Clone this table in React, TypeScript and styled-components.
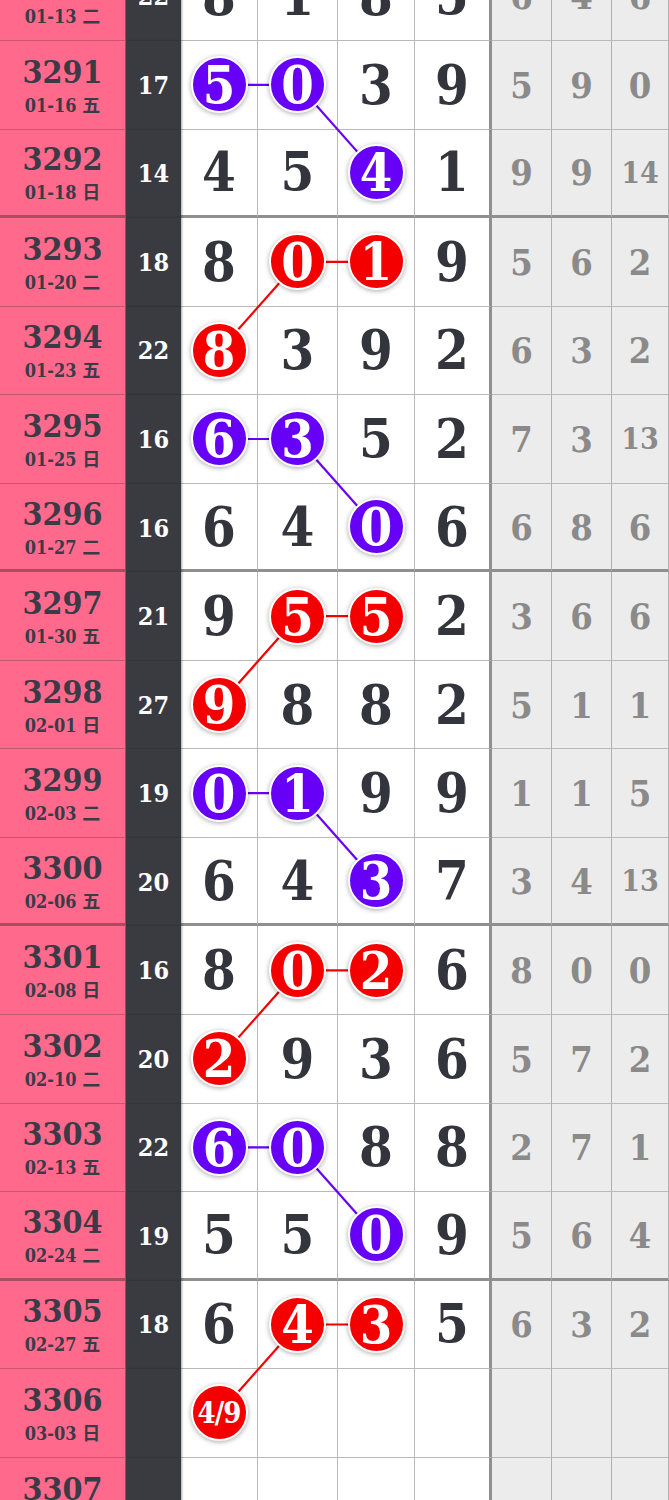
import React from "react";
import styled, { createGlobalStyle, css } from "styled-components";

const GlobalStyle = createGlobalStyle`
  html, body { margin: 0; padding: 0; background: #ffffff; overflow: hidden; }
  * { box-sizing: border-box; }
`;

const ROW_H = 88.55;
const COLS = [126, 55, 77, 80, 77, 77, 60, 60, 57];
const DIGIT_X = [219.5, 298, 376.5, 453.5];
const PURPLE = "#6700f6";
const RED = "#f40000";
const SERIF = `"DejaVu Serif", "Liberation Serif", "Noto Sans CJK SC", serif`;

type Kind = "p" | "r";
type RowData = {
  issue: string;
  date: string;
  sum: string;
  d: string[];
  g: string[];
  m?: Record<number, Kind>;
};

const rows: RowData[] = [
  { issue: "3290", date: "01-13 二", sum: "22", d: ["8", "1", "8", "5"], g: ["6", "4", "6"] },
  { issue: "3291", date: "01-16 五", sum: "17", d: ["5", "0", "3", "9"], g: ["5", "9", "0"], m: { 0: "p", 1: "p" } },
  { issue: "3292", date: "01-18 日", sum: "14", d: ["4", "5", "4", "1"], g: ["9", "9", "14"], m: { 2: "p" } },
  { issue: "3293", date: "01-20 二", sum: "18", d: ["8", "0", "1", "9"], g: ["5", "6", "2"], m: { 1: "r", 2: "r" } },
  { issue: "3294", date: "01-23 五", sum: "22", d: ["8", "3", "9", "2"], g: ["6", "3", "2"], m: { 0: "r" } },
  { issue: "3295", date: "01-25 日", sum: "16", d: ["6", "3", "5", "2"], g: ["7", "3", "13"], m: { 0: "p", 1: "p" } },
  { issue: "3296", date: "01-27 二", sum: "16", d: ["6", "4", "0", "6"], g: ["6", "8", "6"], m: { 2: "p" } },
  { issue: "3297", date: "01-30 五", sum: "21", d: ["9", "5", "5", "2"], g: ["3", "6", "6"], m: { 1: "r", 2: "r" } },
  { issue: "3298", date: "02-01 日", sum: "27", d: ["9", "8", "8", "2"], g: ["5", "1", "1"], m: { 0: "r" } },
  { issue: "3299", date: "02-03 二", sum: "19", d: ["0", "1", "9", "9"], g: ["1", "1", "5"], m: { 0: "p", 1: "p" } },
  { issue: "3300", date: "02-06 五", sum: "20", d: ["6", "4", "3", "7"], g: ["3", "4", "13"], m: { 2: "p" } },
  { issue: "3301", date: "02-08 日", sum: "16", d: ["8", "0", "2", "6"], g: ["8", "0", "0"], m: { 1: "r", 2: "r" } },
  { issue: "3302", date: "02-10 二", sum: "20", d: ["2", "9", "3", "6"], g: ["5", "7", "2"], m: { 0: "r" } },
  { issue: "3303", date: "02-13 五", sum: "22", d: ["6", "0", "8", "8"], g: ["2", "7", "1"], m: { 0: "p", 1: "p" } },
  { issue: "3304", date: "02-24 二", sum: "19", d: ["5", "5", "0", "9"], g: ["5", "6", "4"], m: { 2: "p" } },
  { issue: "3305", date: "02-27 五", sum: "18", d: ["6", "4", "3", "5"], g: ["6", "3", "2"], m: { 1: "r", 2: "r" } },
  { issue: "3306", date: "03-03 日", sum: "", d: ["4/9", "", "", ""], g: ["", "", ""], m: { 0: "r" } },
  { issue: "3307", date: "03-05 二", sum: "", d: ["", "", "", ""], g: ["", "", ""] },
];

type Link = [number, number, number, number, Kind];
const links: Link[] = [];
for (let i = 1; i <= 15; i += 2) {
  const k: Kind = (i - 1) % 4 === 0 ? "p" : "r";
  if (k === "p") {
    links.push([i, 0, i, 1, k]);
    links.push([i, 1, i + 1, 2, k]);
  } else {
    links.push([i, 1, i, 2, k]);
    links.push([i, 1, i + 1, 0, k]);
  }
}

const Board = styled.div`
  position: relative;
  width: 669px;
  margin-top: -47.55px;
  font-family: ${SERIF};
  font-weight: 700;
`;

const Row = styled.div`
  display: grid;
  grid-template-columns: ${COLS.map((c) => `${c}px`).join(" ")};
  height: ${ROW_H}px;
`;

const bottomLine = (thick: boolean, thin: string, strong: string) => css`
  border-bottom: ${thick ? `3px solid ${strong}` : `1px solid ${thin}`};
`;

const IssueCell = styled.div<{ $thick: boolean }>`
  background: #ff6a8c;
  color: #3b3a47;
  border-right: 1px solid #8a5866;
  ${(p) => bottomLine(p.$thick, "#c8566f", "#a94d61")}
  display: flex;
  flex-direction: column;
  align-items: center;
  justify-content: center;
`;

const IssueNo = styled.div`
  font-size: 32px;
  line-height: 36px;
  font-stretch: condensed;
`;

const IssueDate = styled.div`
  margin-top: 6px;
  font-size: 18px;
  line-height: 20px;
  font-stretch: condensed;
`;

const SumCell = styled.div`
  background: #3a3a41;
  color: #ffffff;
  font-size: 25px;
  font-stretch: condensed;
  display: flex;
  align-items: center;
  justify-content: center;
  box-shadow: 1px 0 2px rgba(0, 0, 0, 0.35);
  position: relative;
`;

const DigitCell = styled.div<{ $thick: boolean; $last: boolean }>`
  background: #ffffff;
  color: #34343d;
  border-right: ${(p) => (p.$last ? "3px solid #8f8f8f" : "1px solid #b9b9b9")};
  ${(p) => bottomLine(p.$thick, "#b9b9b9", "#8f8f8f")}
  display: flex;
  align-items: center;
  justify-content: center;
  font-size: 54px;
  font-stretch: condensed;
`;

const GapCell = styled.div<{ $thick: boolean; $small: boolean }>`
  background: #ececec;
  color: #8a8a8a;
  border-right: 1px solid #b0b0b0;
  ${(p) => bottomLine(p.$thick, "#b9b9b9", "#8f8f8f")}
  display: flex;
  align-items: center;
  justify-content: center;
  font-size: ${(p) => (p.$small ? "30px" : "36px")};
  font-stretch: condensed;
`;

const Ball = styled.div<{ $kind: Kind; $small: boolean }>`
  position: relative;
  z-index: 2;
  width: 57px;
  height: 57px;
  border-radius: 50%;
  background: ${(p) => (p.$kind === "p" ? PURPLE : RED)};
  border: 2px solid #ffffff;
  box-shadow: 0 1px 5px rgba(0, 0, 0, 0.35);
  color: #ffffff;
  display: flex;
  align-items: center;
  justify-content: center;
  font-size: ${(p) => (p.$small ? "29px" : "52px")};
  letter-spacing: ${(p) => (p.$small ? "-1px" : "0")};
`;

const Overlay = styled.svg`
  position: absolute;
  left: 0;
  top: 0;
  z-index: 1;
  pointer-events: none;
`;

const cy = (i: number) => i * ROW_H + ROW_H / 2;

export default function App() {
  const total = rows.length * ROW_H;
  return (
    <>
      <GlobalStyle />
      <Board>
        {rows.map((r) => {
          const thick = Number(r.issue) % 4 === 0;
          return (
            <Row key={r.issue}>
              <IssueCell $thick={thick}>
                <IssueNo>{r.issue}</IssueNo>
                <IssueDate>{r.date}</IssueDate>
              </IssueCell>
              <SumCell>{r.sum}</SumCell>
              {r.d.map((v, ci) => {
                const k = r.m?.[ci];
                return (
                  <DigitCell key={ci} $thick={thick} $last={ci === 3}>
                    {k ? (
                      <Ball $kind={k} $small={v.length > 1}>
                        {v}
                      </Ball>
                    ) : (
                      v
                    )}
                  </DigitCell>
                );
              })}
              {r.g.map((v, gi) => (
                <GapCell key={gi} $thick={thick} $small={v.length > 1}>
                  {v}
                </GapCell>
              ))}
            </Row>
          );
        })}
        <Overlay width={669} height={total} viewBox={`0 0 669 ${total}`}>
          {links.map(([r1, c1, r2, c2, k], i) => (
            <line
              key={i}
              x1={DIGIT_X[c1]}
              y1={cy(r1)}
              x2={DIGIT_X[c2]}
              y2={cy(r2)}
              stroke={k === "p" ? PURPLE : RED}
              strokeWidth={2.2}
            />
          ))}
        </Overlay>
      </Board>
    </>
  );
}
